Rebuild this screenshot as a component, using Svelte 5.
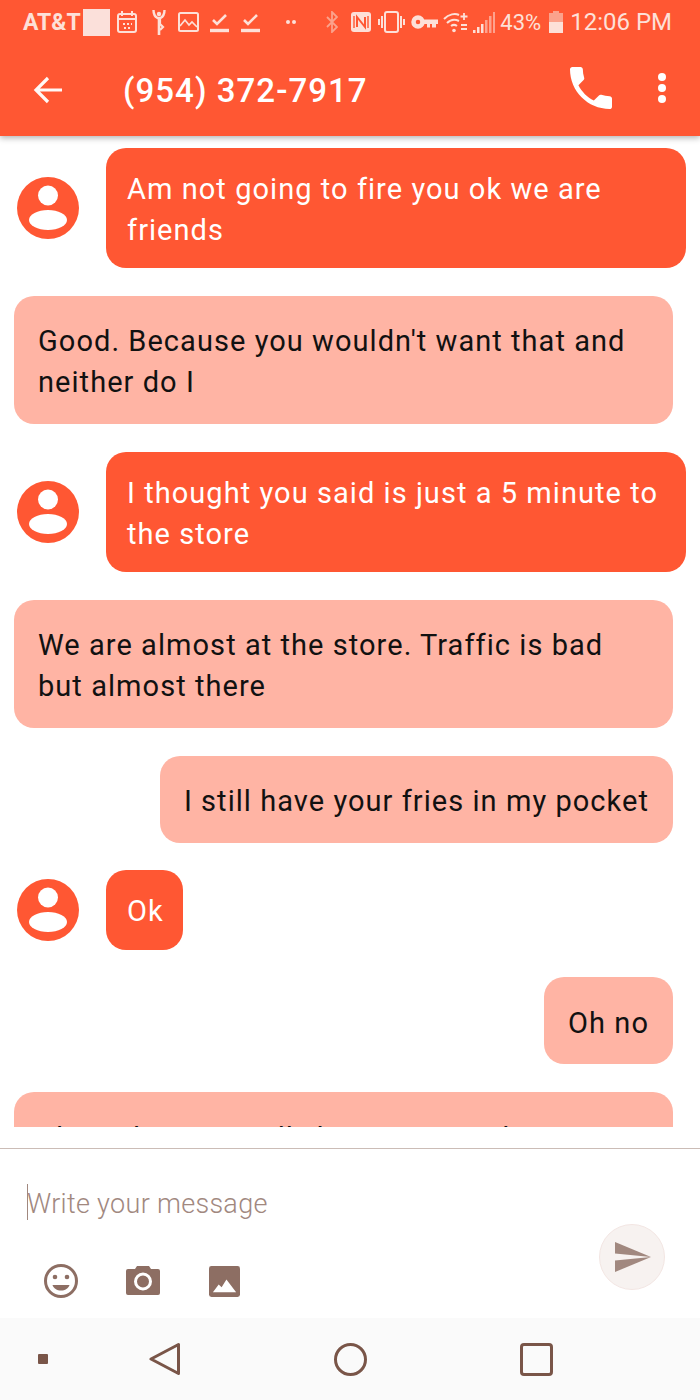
<script>
  const messages = [
    { id: 1, mine: true, text: 'Am not going to fire you ok we are friends' },
    { id: 2, mine: false, text: "Good. Because you wouldn't want that and neither do I", wide: true },
    { id: 3, mine: true, text: 'I thought you said is just a 5 minute to the store' },
    { id: 4, mine: false, text: 'We are almost at the store. Traffic is bad but almost there', wide: true },
    { id: 5, mine: false, text: 'I still have your fries in my pocket' },
    { id: 6, mine: true, text: 'Ok', short: true },
    { id: 7, mine: false, text: 'Oh no' },
    { id: 8, mine: false, text: 'The police is totally busy out in a lot', wide: true }
  ]
</script>

<div class="phone">
  <header>
    <div class="status">
      <span class="carrier">AT&amp;T</span>
      <span class="notif-box"></span>
      <svg class="s-cal" width="20" height="22" viewBox="0 0 20 22" fill="none" stroke="#fde0d8" stroke-width="2"><rect x="1" y="3" width="18" height="18" rx="2"/><path d="M5 0v5M15 0v5M1 8h18"/><path d="M6 13h2M10 13h2M14 13h1M7 17h2M11 17h2" stroke-width="1.8"/></svg>
      <svg class="s-yoga" width="14" height="26" viewBox="0 0 14 26" fill="none" stroke="#fde0d8" stroke-width="2.400"><path d="M1.500 1c0 4 2 7 4 8h3c2-1 4-4 4-8"/><circle cx="7" cy="5" r="2.200" fill="#fde0d8" stroke="none"/><path d="M7 9v17" stroke-width="2.600"/><path d="M8 10v5l3 3-3 3" stroke-width="2.200"/></svg>
      <svg class="s-pic" width="21" height="20" viewBox="0 0 21 20" fill="none" stroke="#fde0d8" stroke-width="2"><rect x="1" y="1" width="19" height="18" rx="1.500"/><path d="M2 14l5-6 4 5 3-3 5 5" stroke-width="1.700"/></svg>
      <svg class="s-chk" width="19" height="21" viewBox="0 0 19 21" fill="none" stroke="#fde0d8" stroke-width="2.600"><path d="M3 8l4 4 9-9"/><path d="M0 18.500h19" stroke-width="3.400"/></svg>
      <svg class="s-chk" width="19" height="21" viewBox="0 0 19 21" fill="none" stroke="#fde0d8" stroke-width="2.600"><path d="M3 8l4 4 9-9"/><path d="M0 18.500h19" stroke-width="3.400"/></svg>
      <span class="dots"><i></i><i></i></span>
      <span class="spacer"></span>
      <svg class="s-bt" width="12" height="22" viewBox="0 0 12 22" fill="none" stroke="#fba28c" stroke-width="1.800"><path d="M1 6l10 10-5 5V1l5 5L1 16"/></svg>
      <svg class="s-nfc" width="20" height="20" viewBox="0 0 20 20"><rect width="20" height="20" rx="3" fill="#fde0d8"/><path d="M3 4v12M17 4v12" stroke="#ff5733" stroke-width="1.400"/><path d="M6 15V5l8 10V5" fill="none" stroke="#ff5733" stroke-width="2"/></svg>
      <svg class="s-vib" width="27" height="22" viewBox="0 0 27 22" fill="none" stroke="#fde0d8" stroke-width="2"><rect x="7" y="1" width="13" height="20" rx="2"/><path d="M4 5v12M23 5v12M1 8v6M26 8v6"/></svg>
      <svg class="s-key" width="27" height="14" viewBox="0 0 27 14"><circle cx="7" cy="7" r="4.500" fill="none" stroke="#fde0d8" stroke-width="4.500"/><path d="M12 4.500h15v4.500h-2v3.500h-4V9h-2v3.500h-3V9h-4z" fill="#fde0d8"/></svg>
      <svg class="s-wifi" width="25" height="22" viewBox="0 0 25 22" fill="none" stroke="#fde0d8" stroke-width="2"><path d="M1 8c5-5 11-6 15-4M4 12c4-4 8-4 12-2M8 15c2-1.500 4-1.500 6 0"/><circle cx="11" cy="19.500" r="1.800" fill="#fde0d8" stroke="none"/><path d="M21 2v7M17.500 5.500h7M18 14h6M18 18h6" stroke-width="1.800"/></svg>
      <svg class="s-sig" width="22" height="22" viewBox="0 0 22 22" fill="#fde0d8"><path d="M0 22h2.500v-3H0zM4 22h2.500v-6H4zM8 22h2.500v-9H8z"/><path d="M12 22h2.500V9H12zM16 22h2.500V5H16zM20 22h2V1h-2z" opacity=".55"/></svg>
      <span class="pct">43%</span>
      <svg class="s-batt" width="14" height="22" viewBox="0 0 14 22"><path d="M4 0h6v2h4v20H0V2h4z" fill="#fba28c"/><rect y="11" width="14" height="11" fill="#fde0d8"/></svg>
      <span class="time">12:06 PM</span>
    </div>
    <div class="toolbar">
      <svg class="back" width="30" height="28" viewBox="0 0 30 28" fill="none" stroke="#fff8f6" stroke-width="3.200"><path d="M29 14H3M15 2L3 14l12 12"/></svg>
      <h1>(954) 372-7917</h1>
      <svg class="call" width="42" height="42" viewBox="3 3 18 18" fill="#fff"><path d="M6.620 10.790c1.440 2.830 3.760 5.140 6.590 6.590l2.200-2.200c.27-.27.67-.36 1.020-.24 1.120.37 2.330.57 3.570.57.550 0 1 .45 1 1V20c0 .55-.45 1-1 1-9.390 0-17-7.610-17-17 0-.55.45-1 1-1h3.500c.55 0 1 .45 1 1 0 1.250.2 2.450.57 3.570.11.350.03.740-.25 1.020l-2.200 2.200z"/></svg>
      <span class="more"><i></i><i></i><i></i></span>
    </div>
  </header>

  <main>
    {#each messages as m (m.id)}
      {#if m.mine}
        <div class="row mine">
          <svg class="avatar" width="62" height="62" viewBox="0 0 62 62"><circle cx="31" cy="31" r="31" fill="#ff5733"/><circle cx="31" cy="18.500" r="10" fill="#fff"/><ellipse cx="31" cy="43" rx="19" ry="10" fill="#fff"/></svg>
          <div class="bubble out" class:fill={!m.short} class:short={m.short}>{m.text}</div>
        </div>
      {:else}
        <div class="row theirs">
          <div class="bubble in" class:wide={m.wide}>{m.text}</div>
        </div>
      {/if}
    {/each}
  </main>

  <footer>
    <div class="composer">
      <div class="input"><span class="caret"></span>Write your message</div>
      <div class="tools">
        <svg width="36" height="36" viewBox="0 0 36 36"><circle cx="18" cy="18" r="15.500" fill="none" stroke="#8d6e63" stroke-width="3"/><circle cx="12" cy="14" r="2.300" fill="#8d6e63"/><circle cx="24" cy="14" r="2.300" fill="#8d6e63"/><path d="M9.500 22h17c-1 3.500-4.500 5.500-8.500 5.500s-7.500-2-8.500-5.500z" fill="#8d6e63"/></svg>
        <svg width="36" height="36" viewBox="0 0 36 36"><path d="M3 6h7l2-3h12l2 3h7a2 2 0 0 1 2 2v22a2 2 0 0 1-2 2H3a2 2 0 0 1-2-2V8a2 2 0 0 1 2-2z" fill="#8d6e63"/><circle cx="18" cy="18.500" r="7.500" fill="none" stroke="#fff" stroke-width="3"/><circle cx="18" cy="18.500" r="5" fill="#8d6e63"/></svg>
        <svg class="gallery" width="31" height="31" viewBox="0 0 32 32"><rect width="32" height="32" rx="2.500" fill="#8d6e63"/><path d="M4 27l6-8 3 3 5-8 10 13z" fill="#fff"/></svg>
      </div>
      <button class="send" aria-label="Send">
        <svg width="38" height="32" viewBox="0 0 38 32" fill="#a1887f"><path d="M1 1l36 15L1 12.500z"/><path d="M1 19.500L37 16 1 31z"/></svg>
      </button>
    </div>
    <nav>
      <span class="recent"></span>
      <svg width="32" height="34" viewBox="0 0 32 34" fill="none" stroke="#795548" stroke-width="3" stroke-linejoin="round"><path d="M29.500 2.500v29L2 17z"/></svg>
      <span class="home"></span>
      <span class="square"></span>
    </nav>
  </footer>
</div>

<style>
  :global(body) {
    margin: 0;
    background: #fff;
  }

  .phone {
    width: 700px;
    height: 1400px;
    display: flex;
    flex-direction: column;
    overflow: hidden;
    font-family: Roboto, "Liberation Sans", sans-serif;
    background: #fff;
  }

  header {
    height: 136px;
    flex: none;
    background: #ff5733;
    box-shadow: 0 2px 6px rgba(0, 0, 0, .3);
    position: relative;
    z-index: 1;
  }

  .status {
    height: 44px;
    display: flex;
    align-items: center;
    padding: 0 28px 0 23px;
    color: #fde0d8;
  }
  .carrier {
    font-size: 23px;
    font-weight: 700;
    margin-right: 2px;
  }
  .notif-box {
    width: 27px;
    height: 27px;
    background: #fbe0da;
    margin-right: 7px;
  }
  .s-yoga { margin-left: 15px; }
  .s-pic { margin-left: 12px; }
  .s-chk { margin-left: 11px; }
  .s-chk + .s-chk { margin-left: 12px; }
  .dots {
    display: flex;
    gap: 2px;
    margin-left: 26px;
  }
  .dots i {
    width: 4px;
    height: 4px;
    border-radius: 50%;
    background: #fde0d8;
  }
  .spacer { flex: 1; }
  .s-nfc { margin-left: 13px; }
  .s-vib { margin-left: 7px; }
  .s-key { margin-left: 6px; }
  .s-wifi { margin-left: 5px; }
  .s-sig { margin-left: 5px; }
  .pct {
    font-size: 22px;
    margin-left: 5px;
  }
  .s-batt { margin-left: 8px; }
  .time {
    font-size: 24px;
    margin-left: 7px;
  }

  .toolbar {
    height: 92px;
    display: flex;
    align-items: center;
    padding: 0 34px 0 33px;
  }
  .back { flex: none; }
  h1 {
    margin: 0 0 0 60px;
    flex: 1;
    font-size: 33px;
    font-weight: 500;
    letter-spacing: 1.05px;
    color: #fff;
  }
  .call { margin-right: 46px; margin-top: -4px; }
  .more {
    display: flex;
    flex-direction: column;
    gap: 3px;
    margin-top: -4px;
  }
  .more i {
    width: 8px;
    height: 8px;
    border-radius: 50%;
    background: #fff;
  }

  main {
    height: 991px;
    flex: none;
    overflow: hidden;
    padding-top: 12px;
    box-sizing: border-box;
    display: flex;
    flex-direction: column;
    gap: 27.7px;
  }

  .row {
    display: flex;
    flex: none;
    align-items: center;
  }
  .row.mine {
    padding: 0 14px 0 17px;
    gap: 27px;
  }
  .row.theirs {
    justify-content: flex-end;
    padding: 0 27px 0 14px;
  }
  .avatar { flex: none; }

  .bubble {
    box-sizing: border-box;
    font-size: 29px;
    line-height: 41px;
    letter-spacing: 1.05px;
    border-radius: 20px;
  }
  .bubble.out {
    background: #ff5733;
    color: #fff;
    padding: 21px 21px 17.2px;
  }
  .bubble.fill { flex: 1; }
  .bubble.short { padding-right: 19px; }
  .bubble.in {
    background: #ffb4a4;
    color: #111;
    padding: 25.5px 24px 20.7px;
  }
  .bubble.wide { width: 100%; }

  footer {
    flex: 1;
    display: flex;
    flex-direction: column;
    border-top: 1px solid #cbbcb6;
    margin-top: 21px;
  }
  .composer {
    height: 169px;
    position: relative;
    padding: 0 0 0 27px;
  }
  .input {
    position: relative;
    height: 36px;
    margin-top: 35px;
    font-size: 27px;
    line-height: 40px;
    font-weight: 300;
    letter-spacing: .3px;
    color: #a1887f;
  }
  .caret {
    position: absolute;
    left: 0;
    top: 0;
    width: 1px;
    height: 36px;
    background: #a1887f;
  }
  .tools {
    display: flex;
    align-items: center;
    gap: 46px;
    margin: 43px 0 0 16px;
  }
  .gallery { margin-left: 2px; }
  .send {
    position: absolute;
    left: 599px;
    top: 75px;
    width: 66px;
    height: 66px;
    border: 1px solid #f3e6e3;
    border-radius: 50%;
    background: #f7f2f0;
    padding: 0 0 0 2px;
    display: flex;
    align-items: center;
    justify-content: center;
  }

  nav {
    flex: 1;
    background: #fafafa;
    display: flex;
    align-items: center;
    padding: 0 0 0 38px;
  }
  .recent {
    width: 10px;
    height: 10px;
    background: #795548;
    border-radius: 1px;
    margin-right: 101px;
  }
  .home {
    width: 27px;
    height: 27px;
    border: 3px solid #795548;
    border-radius: 50%;
    margin: 0 153px;
  }
  .square {
    width: 27px;
    height: 27px;
    border: 3px solid #795548;
    border-radius: 4px;
  }
</style>
